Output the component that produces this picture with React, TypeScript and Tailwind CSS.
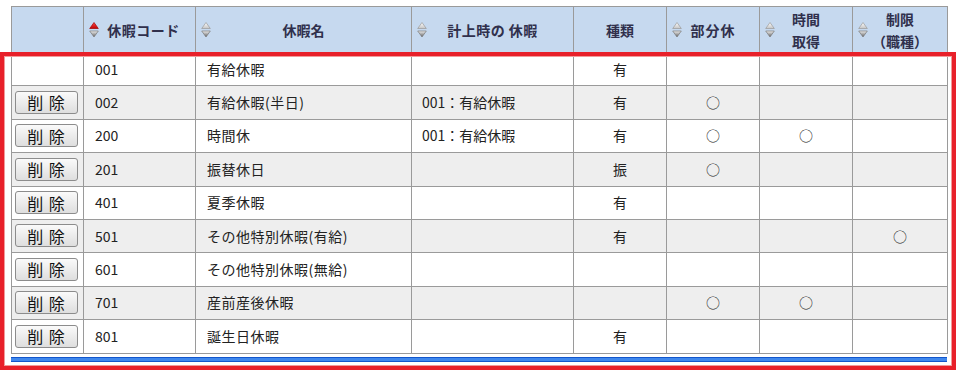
import React from 'react';

type Row = {
  del: boolean;
  code: string;
  name: string;
  base: string;
  kind: string;
  part?: boolean;
  time?: boolean;
  limit?: boolean;
};

const rows: Row[] = [
  { del: false, code: '001', name: '有給休暇', base: '', kind: '有' },
  { del: true, code: '002', name: '有給休暇(半日)', base: '001：有給休暇', kind: '有', part: true },
  { del: true, code: '200', name: '時間休', base: '001：有給休暇', kind: '有', part: true, time: true },
  { del: true, code: '201', name: '振替休日', base: '', kind: '振', part: true },
  { del: true, code: '401', name: '夏季休暇', base: '', kind: '有' },
  { del: true, code: '501', name: 'その他特別休暇(有給)', base: '', kind: '有', limit: true },
  { del: true, code: '601', name: 'その他特別休暇(無給)', base: '', kind: '' },
  { del: true, code: '701', name: '産前産後休暇', base: '', kind: '', part: true, time: true },
  { del: true, code: '801', name: '誕生日休暇', base: '', kind: '有' },
];

function SortIcon({ active = false, id }: { active?: boolean; id: string }) {
  return (
    <svg width="10" height="17" viewBox="0 0 10 17" className="absolute left-[5px] top-1/2 -translate-y-1/2">
      <defs>
        <linearGradient id={`up-${id}`} x1="0" y1="0" x2="0" y2="1">
          <stop offset="0" stopColor={active ? '#ff4a4a' : '#ffffff'} />
          <stop offset="1" stopColor={active ? '#c00000' : '#c4c4c4'} />
        </linearGradient>
        <linearGradient id={`dn-${id}`} x1="0" y1="0" x2="0" y2="1">
          <stop offset="0" stopColor="#f0f0f0" />
          <stop offset="1" stopColor="#5e5e5e" />
        </linearGradient>
      </defs>
      <path d="M5 1 L9.3 7 H0.7 Z" fill={`url(#up-${id})`} stroke={active ? '#a00000' : '#9a9a9a'} strokeWidth="0.7" />
      <path d="M0.7 9.5 H9.3 L5 15.5 Z" fill={`url(#dn-${id})`} stroke="#7a7a7a" strokeWidth="0.7" />
    </svg>
  );
}

const th = 'relative border border-[#9a9a9a] bg-[#c6d9ef] text-[14px] font-bold text-[#30304c] text-center leading-[22px] p-0';
const td = 'border border-[#9a9a9a] p-0 text-[14px] text-[#222]';

export default function App() {
  return (
    <div
      className="relative w-[956px] h-[370px] overflow-hidden bg-white"
      style={{ fontFamily: '"Noto Sans CJK JP", "Noto Sans", sans-serif' }}
    >
      <table className="ml-[11px] mt-[6px] w-[936px] border-collapse table-fixed">
        <colgroup>
          <col className="w-[72px]" />
          <col className="w-[112px]" />
          <col className="w-[216px]" />
          <col className="w-[162px]" />
          <col className="w-[93px]" />
          <col className="w-[93px]" />
          <col className="w-[93px]" />
          <col className="w-[95px]" />
        </colgroup>
        <thead>
          <tr className="h-[46px]">
            <th className={th}></th>
            <th className={th}>
              <SortIcon active id="code" />
              <span className="pl-[8px] tracking-[0.5px]">休暇コード</span>
            </th>
            <th className={th}>
              <SortIcon id="name" />
              休暇名
            </th>
            <th className={th}>
              <SortIcon id="base" />
              <span className="tracking-[0.5px]">計上時の 休暇</span>
            </th>
            <th className={th}>種類</th>
            <th className={th}>
              <SortIcon id="part" />
              <span className="tracking-[1px]">部分休</span>
            </th>
            <th className={th}>
              <SortIcon id="time" />
              時間
              <br />
              取得
            </th>
            <th className={th}>
              <SortIcon id="limit" />
              制限
              <br />
              （職種）
            </th>
          </tr>
        </thead>
        <tbody>
          {rows.map((r, i) => (
            <tr key={r.code} className={`h-[33.4px] ${i % 2 === 1 ? 'bg-[#eeeeee]' : 'bg-white'}`}>
              <td className={`${td} pl-[3px]`}>
                {r.del && (
                  <button className="w-[63px] h-[23px] rounded-[3px] border border-[#8c8c8c] bg-gradient-to-b from-[#fafafa] to-[#dedede] text-[16px] leading-[20px] text-[#111] tracking-[1px]">
                    削 除
                  </button>
                )}
              </td>
              <td className={`${td} pl-[11px]`}>{r.code}</td>
              <td className={`${td} pl-[11px] tracking-[0.5px]`}>{r.name}</td>
              <td className={`${td} pl-[10px]`}>{r.base}</td>
              <td className={`${td} text-center`}>{r.kind}</td>
              <td className={`${td} text-center`}>{r.part ? '○' : ''}</td>
              <td className={`${td} text-center`}>{r.time ? '○' : ''}</td>
              <td className={`${td} text-center`}>{r.limit ? '○' : ''}</td>
            </tr>
          ))}
        </tbody>
      </table>

      {/* blue footer line */}
      <div className="ml-[11px] mt-[3px] w-[936px] h-[5px] border-y border-[#1256cc] bg-[#3f87ec]" />

      {/* red highlight frame */}
      <div className="absolute left-0 top-[52px] w-[956px] h-[318px] border-[4px] border-[#e8202a] shadow-[inset_0_0_0_1px_#f29a9a] pointer-events-none" />
    </div>
  );
}
